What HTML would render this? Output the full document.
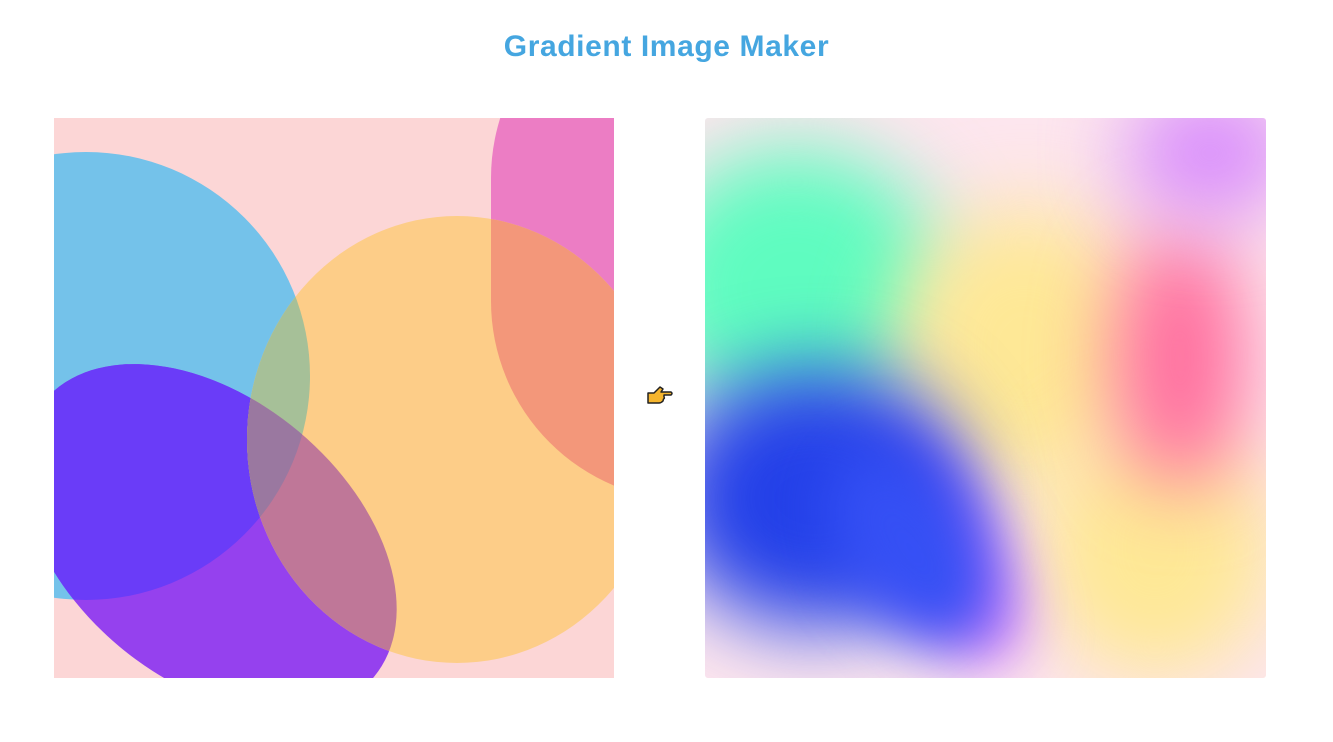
<!DOCTYPE html>
<html><head><meta charset="utf-8"><style>
html,body{margin:0;width:1333px;height:742px;overflow:hidden}
body{background:#fff;position:relative;font-family:"Liberation Sans",sans-serif}
h1{position:absolute;top:30px;left:0;width:1333px;text-align:center;margin:0;font-size:30px;line-height:34px;font-weight:bold;color:#45a6e0;letter-spacing:0.6px}
#l{position:absolute;left:54px;top:118px;width:560px;height:560px}
#r{position:absolute;left:705px;top:118px;width:561px;height:560px;overflow:hidden;background:#fde6ee;border-radius:3px}
#r div{position:absolute;border-radius:50%;filter:blur(40px)}
</style></head><body>
<h1>Gradient Image Maker</h1>
<svg id="l" width="560" height="560" viewBox="0 0 560 560">
<defs>
<clipPath id="c"><rect width="560" height="560"/></clipPath>
<clipPath id="cb"><circle cx="32" cy="258" r="224"/></clipPath>
<clipPath id="cy"><rect x="193" y="98" width="420" height="447" rx="210" ry="224"/></clipPath>
</defs>
<g clip-path="url(#c)">
<rect width="560" height="560" fill="#fcd6d6"/>
<rect x="437" y="-140" width="420" height="523" rx="200" fill="#ec7dc4"/>
<circle cx="32" cy="258" r="224" fill="#74c2ea"/>
<ellipse cx="155" cy="421" rx="215" ry="140" transform="rotate(40 155 421)" fill="#9541ee"/>
<g clip-path="url(#cb)"><ellipse cx="155" cy="421" rx="215" ry="140" transform="rotate(40 155 421)" fill="#6a3cf8"/></g>
<rect x="193" y="98" width="420" height="447" rx="210" ry="224" fill="#fdcd88"/>
<g clip-path="url(#cy)">
<rect x="437" y="-140" width="420" height="523" rx="200" fill="#f3977a"/>
<circle cx="32" cy="258" r="224" fill="#a6c098"/>
<ellipse cx="155" cy="421" rx="215" ry="140" transform="rotate(40 155 421)" fill="#bf7798"/>
<g clip-path="url(#cb)"><ellipse cx="155" cy="421" rx="215" ry="140" transform="rotate(40 155 421)" fill="#9a78a0"/></g>
</g>
</g></svg>
<svg style="position:absolute;left:646px;top:385px" width="28" height="20" viewBox="0 0 28 20">
<path d="M2 8 L8 8 L14 2 L17 4 L15 7 L25 7 Q27 8.5 25 10 L18 10 L18 12 Q19 13.5 17.5 14 L17 16 Q15 18 13 18 L2 18 Z" fill="#f5b52e" stroke="#222" stroke-width="1.5" stroke-linejoin="round"/>
</svg>
<div id="r">
<div style="left:-60px;top:30px;width:300px;height:280px;background:#5ffcc0"></div>
<div style="left:190px;top:90px;width:260px;height:280px;background:#fee896"></div>
<div style="left:330px;top:300px;width:240px;height:260px;background:#fee896"></div>
<div style="left:410px;top:110px;width:130px;height:260px;background:#ff6b9d"></div>
<div style="left:420px;top:-30px;width:170px;height:130px;background:#d88cfc"></div>
<div style="left:180px;top:300px;width:110px;height:260px;background:#cc70ff;filter:blur(30px);transform:rotate(-30deg)"></div>
<div style="left:-40px;top:250px;width:300px;height:260px;background:#2340e8"></div>
<div style="left:140px;top:320px;width:130px;height:220px;background:#3550f5;transform:rotate(-35deg);filter:blur(30px)"></div>
</div>
</body></html>
